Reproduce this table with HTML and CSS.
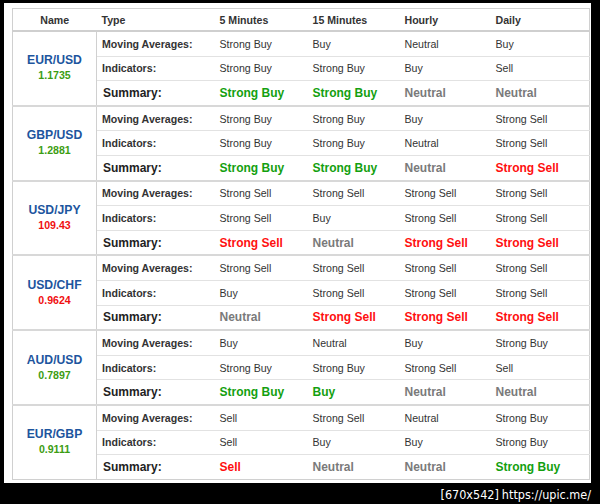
FILE: index.html
```html
<!DOCTYPE html>
<html>
<head>
<meta charset="utf-8">
<link rel="stylesheet" href="styles.css">
</head>
<body>
<div class="frame">
  <div class="panel">
    <table class="tech">
      <colgroup>
        <col class="c-name"><col class="c-type"><col class="c-5"><col class="c-15"><col class="c-h"><col class="c-d">
      </colgroup>
      <thead>
        <tr><th class="th-name">Name</th><th>Type</th><th>5 Minutes</th><th>15 Minutes</th><th>Hourly</th><th>Daily</th></tr>
      </thead>
      <tbody>
        <tr class="first"><td class="pair" rowspan="3"><div class="sym">EUR/USD</div><div class="px up">1.1735</div></td><td class="lbl">Moving Averages:</td><td>Strong Buy</td><td>Buy</td><td>Neutral</td><td>Buy</td></tr>
        <tr><td class="lbl">Indicators:</td><td>Strong Buy</td><td>Strong Buy</td><td>Buy</td><td>Sell</td></tr>
        <tr class="sum"><td class="lbl">Summary:</td><td class="buy">Strong Buy</td><td class="buy">Strong Buy</td><td class="neu">Neutral</td><td class="neu">Neutral</td></tr>

        <tr class="first"><td class="pair" rowspan="3"><div class="sym">GBP/USD</div><div class="px up">1.2881</div></td><td class="lbl">Moving Averages:</td><td>Strong Buy</td><td>Strong Buy</td><td>Buy</td><td>Strong Sell</td></tr>
        <tr><td class="lbl">Indicators:</td><td>Strong Buy</td><td>Strong Buy</td><td>Neutral</td><td>Strong Sell</td></tr>
        <tr class="sum"><td class="lbl">Summary:</td><td class="buy">Strong Buy</td><td class="buy">Strong Buy</td><td class="neu">Neutral</td><td class="sell">Strong Sell</td></tr>

        <tr class="first"><td class="pair" rowspan="3"><div class="sym">USD/JPY</div><div class="px down">109.43</div></td><td class="lbl">Moving Averages:</td><td>Strong Sell</td><td>Strong Sell</td><td>Strong Sell</td><td>Strong Sell</td></tr>
        <tr><td class="lbl">Indicators:</td><td>Strong Sell</td><td>Buy</td><td>Strong Sell</td><td>Strong Sell</td></tr>
        <tr class="sum"><td class="lbl">Summary:</td><td class="sell">Strong Sell</td><td class="neu">Neutral</td><td class="sell">Strong Sell</td><td class="sell">Strong Sell</td></tr>

        <tr class="first"><td class="pair" rowspan="3"><div class="sym">USD/CHF</div><div class="px down">0.9624</div></td><td class="lbl">Moving Averages:</td><td>Strong Sell</td><td>Strong Sell</td><td>Strong Sell</td><td>Strong Sell</td></tr>
        <tr><td class="lbl">Indicators:</td><td>Buy</td><td>Strong Sell</td><td>Strong Sell</td><td>Strong Sell</td></tr>
        <tr class="sum"><td class="lbl">Summary:</td><td class="neu">Neutral</td><td class="sell">Strong Sell</td><td class="sell">Strong Sell</td><td class="sell">Strong Sell</td></tr>

        <tr class="first"><td class="pair" rowspan="3"><div class="sym">AUD/USD</div><div class="px up">0.7897</div></td><td class="lbl">Moving Averages:</td><td>Buy</td><td>Neutral</td><td>Buy</td><td>Strong Buy</td></tr>
        <tr><td class="lbl">Indicators:</td><td>Strong Buy</td><td>Strong Buy</td><td>Strong Sell</td><td>Sell</td></tr>
        <tr class="sum"><td class="lbl">Summary:</td><td class="buy">Strong Buy</td><td class="buy">Buy</td><td class="neu">Neutral</td><td class="neu">Neutral</td></tr>

        <tr class="first"><td class="pair" rowspan="3"><div class="sym">EUR/GBP</div><div class="px up">0.9111</div></td><td class="lbl">Moving Averages:</td><td>Sell</td><td>Strong Sell</td><td>Neutral</td><td>Strong Buy</td></tr>
        <tr><td class="lbl">Indicators:</td><td>Sell</td><td>Buy</td><td>Buy</td><td>Strong Buy</td></tr>
        <tr class="sum"><td class="lbl">Summary:</td><td class="sell">Sell</td><td class="neu">Neutral</td><td class="neu">Neutral</td><td class="buy">Strong Buy</td></tr>
      </tbody>
    </table>
  </div>
  <div class="footer"><span class="mark">[670x542]</span><span class="mark">https://upic.me/</span></div>
</div>
</body>
</html>
```

FILE: styles.css
```css
html, body {
  margin: 0;
  padding: 0;
  background: #000;
}
.frame {
  width: 600px;
  height: 504px;
  padding: 3px 9px 0 4px;
  box-sizing: border-box;
  display: flex;
  flex-direction: column;
}
.panel {
  background: #fff;
  height: 480px;
  padding: 5px 2px 0 8px;
  box-sizing: border-box;
  overflow: hidden;
}
.footer {
  flex: 1;
  display: flex;
  justify-content: flex-end;
  align-items: center;
  gap: 3px;
  color: #fff;
  font-family: "DejaVu Sans", sans-serif;
  font-stretch: condensed;
  font-size: 12.5px;
  padding-top: 2px;
}
.tech {
  width: 577px;
  table-layout: fixed;
  border-collapse: collapse;
  border: 1px solid #d0d0d0;
  font-family: "Liberation Sans", Arial, sans-serif;
  font-size: 10.6px;
  color: #333;
}
.c-name { width: 84px; }
.c-type { width: 118px; }
.c-5 { width: 93px; }
.c-15 { width: 92px; }
.c-h { width: 91px; }
.c-d { width: 99px; }
.tech th {
  height: 21px;
  padding: 0 5px;
  text-align: left;
  font-weight: bold;
  color: #333;
  border-bottom: 2px solid #cfcfcf;
}
.tech th.th-name { text-align: center; }
.tech td {
  height: 23.6px;
  padding: 0 5px;
  border-top: 1px solid #e2e2e2;
  white-space: nowrap;
}
.tech tr.first td { border-top: 2px solid #d8d8d8; }
.tech td.pair {
  text-align: center;
  border-right: 1px solid #d0d0d0;
  padding: 0;
}
.sym {
  font-size: 12.2px;
  font-weight: bold;
  color: #1d559e;
  line-height: 15px;
}
.px {
  font-weight: bold;
  line-height: 15px;
}
.px.up { color: #3c9d12; }
.px.down { color: #f01010; }
.lbl { font-weight: bold; }
.sum td.lbl { font-size: 12px; color: #222; padding-left: 6px; }
.sum td { font-size: 12px; font-weight: bold; }
.buy { color: #13a00f; }
.sell { color: #ff1010; }
.neu { color: #7a7a7a; }
```
